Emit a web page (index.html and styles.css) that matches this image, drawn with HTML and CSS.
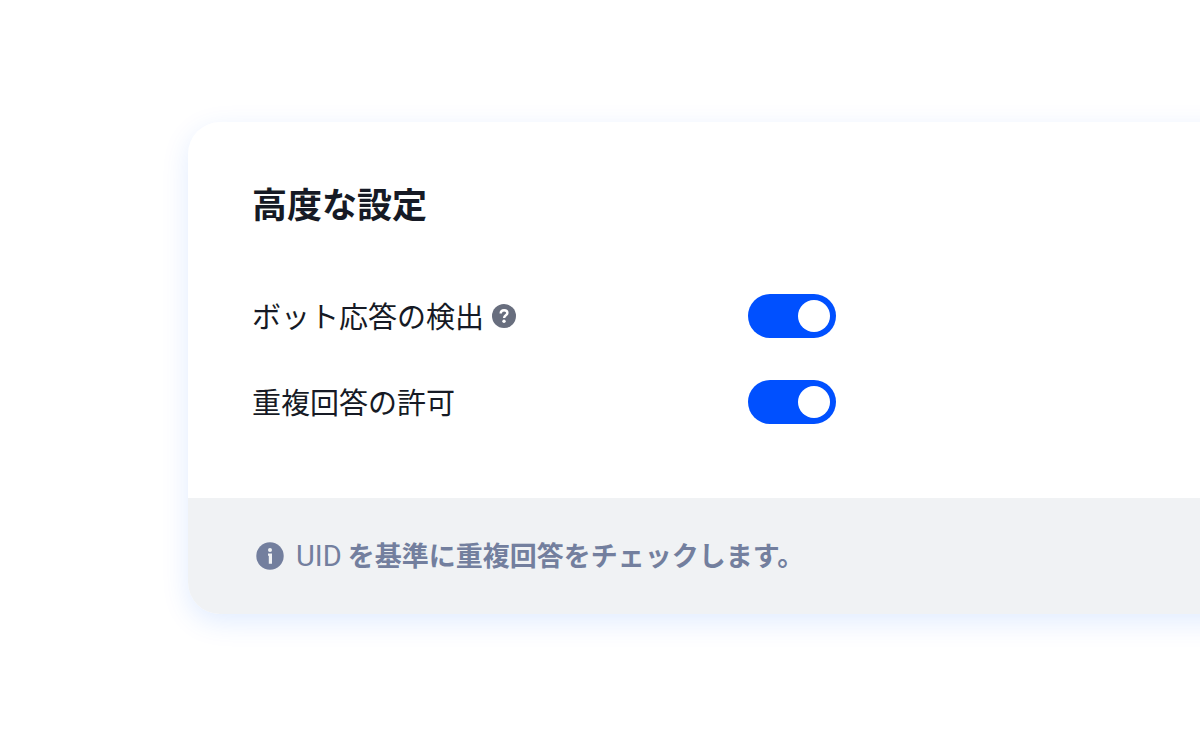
FILE: index.html
```
<!DOCTYPE html>
<html lang="ja">
  <head>
    <meta charset="utf-8">
    <meta name="viewport" content="width=device-width, initial-scale=1">
    <title>高度な設定</title>
    <link rel="stylesheet" href="styles.css">
  </head>

  <body>
    <section class="card">
      <div class="settings">
        <h2 class="title">高度な設定</h2>

        <div class="row">
          <div class="name">
            <label for="bot">ボット応答の検出</label>
            <svg class="help" viewBox="0 0 24 24" aria-hidden="true">
              <circle cx="12" cy="12" r="12" fill="#686e7e"/>
              <path d="M8.7 9.6C8.7 7.6 10.1 6.2 12.1 6.2c2 0 3.3 1.1 3.3 2.8 0 2.4-3.3 2.3-3.3 5" fill="none" stroke="#fff" stroke-width="2.4"/>
              <circle cx="12" cy="17.2" r="1.7" fill="#fff"/>
            </svg>
          </div>
          <input class="switch" type="checkbox" id="bot" checked>
        </div>

        <div class="row">
          <div class="name">
            <label for="duplicate">重複回答の許可</label>
          </div>
          <input class="switch" type="checkbox" id="duplicate" checked>
        </div>
      </div>

      <div class="note">
        <svg class="info" viewBox="0 0 28 28" aria-hidden="true">
          <circle cx="14" cy="14" r="13.7" fill="#737f9e"/>
          <circle cx="14" cy="8" r="2" fill="#f0f2f4"/>
          <path d="M12 11.5h4v10.2h-3.2v-8H12z" fill="#f0f2f4"/>
        </svg>
        <p class="text"><span class="latin">UID</span> を基準に重複回答をチェックします。</p>
      </div>
    </section>
  </body>
</html>
```

FILE: styles.css
```
* {
  box-sizing: border-box;
}

body {
  margin: 0;
  padding: 122px 0 122px 188px;
  overflow-x: hidden;
  background: #fff;
  color: #161a25;
  font-family: "Noto Sans CJK JP", sans-serif;
}

/* the card runs past the right edge of the window */
.card {
  margin-right: -64px;
  border-radius: 32px;
  overflow: hidden;
  background: #fff;
  box-shadow: 0 8px 28px rgba(0, 100, 255, 0.12);
}

.settings {
  padding: 57px 64px 74px;
}

.title {
  margin: 0 0 67px;
  font-size: 35px;
  line-height: 48px;
  font-weight: 700;
}

.row {
  display: grid;
  grid-template-columns: 496px auto;
  justify-content: start;
  align-items: center;
  height: 44px;
}

.row + .row {
  margin-top: 42px;
}

.name {
  display: flex;
  align-items: center;
  gap: 8px;
  font-size: 29px;
  line-height: 42px;
}

.name label {
  padding-bottom: 2px;
}

.help {
  width: 24px;
  height: 24px;
}

.switch {
  appearance: none;
  display: flex;
  justify-content: flex-start;
  width: 88px;
  height: 44px;
  margin: 0;
  padding: 6px;
  border-radius: 22px;
  background: #c3c8d4;
  cursor: pointer;
}

.switch::before {
  content: "";
  width: 32px;
  height: 32px;
  border-radius: 50%;
  background: #fff;
}

.switch:checked {
  justify-content: flex-end;
  background: #0050ff;
}

.note {
  display: flex;
  align-items: center;
  gap: 12px;
  padding: 38px 68px;
  background: #f0f2f4;
  color: #737f9e;
}

.info {
  flex: none;
  width: 28px;
  height: 28px;
}

.text {
  margin: 0;
  padding-bottom: 2px;
  font-size: 27px;
  line-height: 38px;
  font-weight: 700;
}

.latin {
  font-family: Roboto, sans-serif;
  font-size: 29px;
  line-height: 1;
  font-weight: 400;
}
```
